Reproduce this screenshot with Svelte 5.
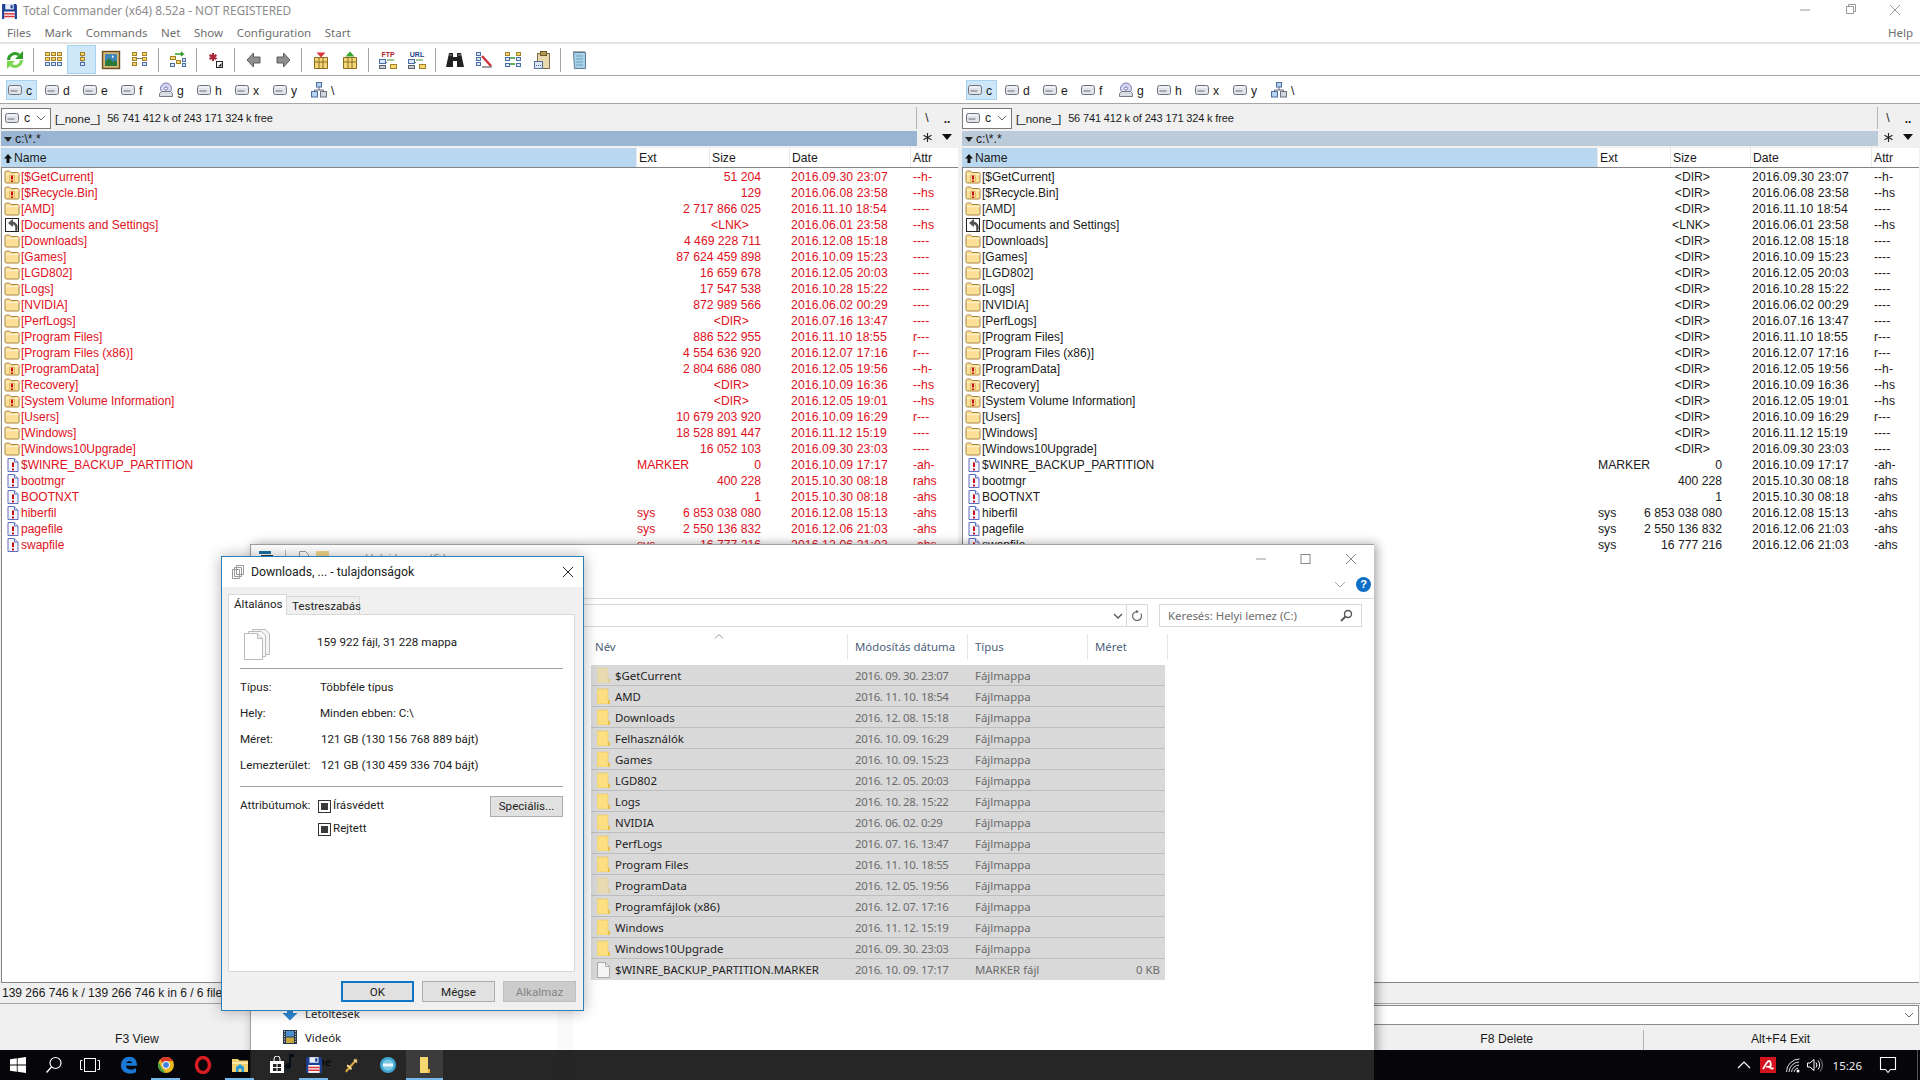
<script lang="ts">
  type Row = { name: string; ext?: string; size: string; date: string; attr: string; icon: string };

  const d = 'dir', w = 'dirwarn', l = 'link', f = 'filewarn';
  const rows: Row[] = [
    { name: '[$GetCurrent]', size: '51 204', date: '2016.09.30 23:07', attr: '--h-', icon: w },
    { name: '[$Recycle.Bin]', size: '129', date: '2016.06.08 23:58', attr: '--hs', icon: w },
    { name: '[AMD]', size: '2 717 866 025', date: '2016.11.10 18:54', attr: '----', icon: d },
    { name: '[Documents and Settings]', size: '<LNK>', date: '2016.06.01 23:58', attr: '--hs', icon: l },
    { name: '[Downloads]', size: '4 469 228 711', date: '2016.12.08 15:18', attr: '----', icon: d },
    { name: '[Games]', size: '87 624 459 898', date: '2016.10.09 15:23', attr: '----', icon: d },
    { name: '[LGD802]', size: '16 659 678', date: '2016.12.05 20:03', attr: '----', icon: d },
    { name: '[Logs]', size: '17 547 538', date: '2016.10.28 15:22', attr: '----', icon: d },
    { name: '[NVIDIA]', size: '872 989 566', date: '2016.06.02 00:29', attr: '----', icon: d },
    { name: '[PerfLogs]', size: '<DIR>', date: '2016.07.16 13:47', attr: '----', icon: d },
    { name: '[Program Files]', size: '886 522 955', date: '2016.11.10 18:55', attr: 'r---', icon: d },
    { name: '[Program Files (x86)]', size: '4 554 636 920', date: '2016.12.07 17:16', attr: 'r---', icon: d },
    { name: '[ProgramData]', size: '2 804 686 080', date: '2016.12.05 19:56', attr: '--h-', icon: w },
    { name: '[Recovery]', size: '<DIR>', date: '2016.10.09 16:36', attr: '--hs', icon: w },
    { name: '[System Volume Information]', size: '<DIR>', date: '2016.12.05 19:01', attr: '--hs', icon: w },
    { name: '[Users]', size: '10 679 203 920', date: '2016.10.09 16:29', attr: 'r---', icon: d },
    { name: '[Windows]', size: '18 528 891 447', date: '2016.11.12 15:19', attr: '----', icon: d },
    { name: '[Windows10Upgrade]', size: '16 052 103', date: '2016.09.30 23:03', attr: '----', icon: d },
    { name: '$WINRE_BACKUP_PARTITION', ext: 'MARKER', size: '0', date: '2016.10.09 17:17', attr: '-ah-', icon: f },
    { name: 'bootmgr', size: '400 228', date: '2015.10.30 08:18', attr: 'rahs', icon: f },
    { name: 'BOOTNXT', size: '1', date: '2015.10.30 08:18', attr: '-ahs', icon: f },
    { name: 'hiberfil', ext: 'sys', size: '6 853 038 080', date: '2016.12.08 15:13', attr: '-ahs', icon: f },
    { name: 'pagefile', ext: 'sys', size: '2 550 136 832', date: '2016.12.06 21:03', attr: '-ahs', icon: f },
    { name: 'swapfile', ext: 'sys', size: '16 777 216', date: '2016.12.06 21:03', attr: '-ahs', icon: f },
  ];

  // right panel has not calculated folder sizes
  const rightRows = rows.map((r) => (r.name.startsWith('[') && r.size !== '<LNK>' ? { ...r, size: '<DIR>' } : r));

  const menus = ['Files', 'Mark', 'Commands', 'Net', 'Show', 'Configuration', 'Start'];
  const tools = ['refresh', 'sep', 'brief', 'full', 'thumb', 'tree', 'sep', 'sync', 'sep', 'star', 'sep', 'back', 'fwd', 'sep', 'pack', 'unpack', 'sep', 'ftp', 'url', 'sep', 'find', 'rename', 'syncdir', 'clip', 'sep', 'note'];
  const drives = ['c', 'd', 'e', 'f', 'g', 'h', 'x', 'y'];
  const fkeys = ['F3 View', 'F4 Edit', 'F5 Copy', 'F6 Move', 'F7 NewFolder', 'F8 Delete', 'Alt+F4 Exit'];

  const explorerRows = [
    { n: '$GetCurrent', d: '2016. 09. 30. 23:07', faded: true },
    { n: 'AMD', d: '2016. 11. 10. 18:54' },
    { n: 'Downloads', d: '2016. 12. 08. 15:18' },
    { n: 'Felhasználók', d: '2016. 10. 09. 16:29' },
    { n: 'Games', d: '2016. 10. 09. 15:23' },
    { n: 'LGD802', d: '2016. 12. 05. 20:03' },
    { n: 'Logs', d: '2016. 10. 28. 15:22' },
    { n: 'NVIDIA', d: '2016. 06. 02. 0:29' },
    { n: 'PerfLogs', d: '2016. 07. 16. 13:47' },
    { n: 'Program Files', d: '2016. 11. 10. 18:55' },
    { n: 'ProgramData', d: '2016. 12. 05. 19:56', faded: true },
    { n: 'Programfájlok (x86)', d: '2016. 12. 07. 17:16' },
    { n: 'Windows', d: '2016. 11. 12. 15:19' },
    { n: 'Windows10Upgrade', d: '2016. 09. 30. 23:03' },
  ];

  const gridCells = (xs: number[], ys: number[], w = 4, h = 3) => xs.flatMap((x) => ys.map((y) => [x, y, w, h]));
</script>

{#snippet cells(list, fill, stroke)}
  {#each list as c}
    <rect x={c[0] + 0.5} y={c[1] + 0.5} width={c[2]} height={c[3]} {fill} {stroke} stroke-width="1" />
  {/each}
{/snippet}

{#snippet floppy(size)}
  <svg width={size} height={size} viewBox="0 0 16 16">
    <path d="M1 1h13l1 1v13H1z" fill="#1c3f94" />
    <rect x="4" y="1" width="8" height="5" fill="#e8eef8" />
    <rect x="9" y="2" width="2" height="3" fill="#1c3f94" />
    <rect x="3" y="8" width="10" height="7" fill="#fff" />
    <rect x="3" y="9.5" width="10" height="1.4" fill="#d8343c" />
    <rect x="3" y="12" width="10" height="1.4" fill="#d8343c" />
  </svg>
{/snippet}

{#snippet fileIcon(kind)}
  <svg class="ficon" width="16" height="16" viewBox="0 0 16 16">
    {#if kind === 'dir' || kind === 'dirwarn'}
      <path d="M1 3.500q0-1.500 1.500-1.500h3l1.500 1.500h6.500q1.500 0 1.500 1.500v8q0 1-1.500 1H2.500Q1 14 1 12.500z" fill="#fbe09a" stroke="#a5843a" />
      <path d="M1.500 5.500h13.500" stroke="#fff3cf" />
      {#if kind === 'dirwarn'}
        <rect x="5.500" y="6" width="5" height="7.500" fill="#f7d98c" stroke="#c9a34a" stroke-width=".5" />
        <path d="M8 6.500v4M8 11.500v1.500" stroke="#c8101c" stroke-width="2" />
      {/if}
    {:else if kind === 'link'}
      <rect x="1.500" y="1.500" width="13" height="13" fill="#fff" stroke="#222" />
      <path d="M11.500 13.500c.5-3.500 0-6-3-6.500v2.500L4.500 6 8.500 2.500V5c4.500.5 5.500 4 4.500 8.500z" fill="#555" stroke="#222" stroke-width=".5" />
    {:else}
      <path d="M4 1.500h6.500l3.500 3.500v9.500H4z" fill="#f4f6ff" stroke="#5f6fc0" />
      <path d="M10.500 1.500v3.500h3.500" fill="#dfe4fa" stroke="#5f6fc0" />
      <path d="M9 5.500v4.500M9 11.500v2" stroke="#c8101c" stroke-width="2" />
    {/if}
  </svg>
{/snippet}

{#snippet driveIcon(letter)}
  <svg class="dicon" width="16" height="16" viewBox="0 0 16 16">
    {#if letter === 'g'}
      <ellipse cx="8" cy="6.500" rx="5.500" ry="5.500" fill="#d6d6f2" stroke="#7a7ab4" />
      <circle cx="8" cy="6.500" r="1.500" fill="#fff" stroke="#7a7ab4" />
      <path d="M1.500 11.500l2-2h9l2 2v3h-13z" fill="#d9dce2" stroke="#737a88" />
    {:else}
      <rect x="1.500" y="3.500" width="13" height="9" rx="2" fill="#e2e4e8" stroke="#6b7280" />
      <rect x="3.500" y="8" width="7" height="2" fill="#a3a9b3" />
      <path d="M3 5h10" stroke="#fff" />
    {/if}
  </svg>
{/snippet}

{#snippet networkIcon()}
  <svg class="dicon" width="18" height="18" viewBox="0 0 18 18">
    <path d="M9 6v3M4.500 11V9h9v2" stroke="#667" fill="none" />
    <rect x="6.500" y="1.500" width="5" height="4.500" fill="#b4d2f2" stroke="#4c6d99" />
    <rect x="1.500" y="10.500" width="6" height="5.500" fill="#b4d2f2" stroke="#4c6d99" />
    <rect x="10.500" y="10.500" width="6" height="5.500" fill="#d2d6da" stroke="#6d7580" />
  </svg>
{/snippet}

{#snippet toolIcon(id)}
  <svg width="22" height="22" viewBox="0 0 22 22">
    {#if id === 'refresh'}
      <path d="M4.500 11a6.500 6.500 0 0 1 10.500-5" fill="none" stroke="#2f9e26" stroke-width="3" />
      <path d="M19 2v8h-8z" fill="#2f9e26" />
      <path d="M17.500 11a6.500 6.500 0 0 1-10.500 5" fill="none" stroke="#7ad84e" stroke-width="3" />
      <path d="M3 20v-8h8z" fill="#7ad84e" />
    {:else if id === 'brief'}
      {@render cells(gridCells([3, 9, 15], [3, 8], 4, 3), '#f6d66e', '#a4822a')}
      {@render cells(gridCells([3, 9, 15], [13], 4, 3), '#dbe6f6', '#4c6ea6')}
    {:else if id === 'full'}
      {@render cells([[9, 3, 4, 3], [9, 8, 4, 3]], '#f6d66e', '#a4822a')}
      {@render cells([[9, 13, 4, 3]], '#dbe6f6', '#4c6ea6')}
      <path d="M11 6.500v1.500M11 11.500v1.500" stroke="#777" />
    {:else if id === 'thumb'}
      <rect x="2.500" y="2.500" width="17" height="17" fill="#d8b878" stroke="#6b4c1e" stroke-width="1.400" />
      <rect x="5" y="5" width="12" height="12" fill="#3f86b8" />
      <path d="M5 17v-4l4-4 4 4 2-2 2 2v4z" fill="#2a7a38" />
      <path d="M12 6l2 2-2 1z" fill="#fff" />
    {:else if id === 'tree'}
      {@render cells([[3, 3, 4, 3], [3, 8, 4, 3], [3, 13, 4, 3], [13, 3, 4, 3], [13, 8, 4, 3]], '#f6d66e', '#a4822a')}
      {@render cells([[13, 13, 4, 3]], '#dbe6f6', '#4c6ea6')}
      <path d="M7.500 9.500h6" stroke="#777" />
    {:else if id === 'sync'}
      {@render cells([[3, 7, 5, 3], [9, 11, 4, 3]], '#f6d66e', '#a4822a')}
      {@render cells([[15, 9, 3, 3], [15, 14, 3, 3], [3, 14, 4, 3]], '#dbe6f6', '#4c6ea6')}
      <path d="M8 5h8l-2-2M16 5l-2 2" stroke="#2f9a28" fill="none" stroke-width="1.500" />
    {:else if id === 'star'}
      <path d="M8 4v8M4.500 6l7 4M11.500 6l-7 4" stroke="#a8283a" stroke-width="2.200" />
      <rect x="11.500" y="12.500" width="6" height="6" fill="#fff" stroke="#222" />
      <path d="M16.500 14v3.500h-3.500z" fill="#222" />
    {:else if id === 'back'}
      <path d="M4 11l6.500-7v4H17v6h-6.500v4z" fill="#8e8e8e" stroke="#5c5c5c" />
    {:else if id === 'fwd'}
      <path d="M18 11l-6.500-7v4H5v6h6.500v4z" fill="#8e8e8e" stroke="#5c5c5c" />
    {:else if id === 'pack' || id === 'unpack'}
      <path d="M4.500 8.500h13v11h-13z" fill="#f5d77a" stroke="#8c6c1e" />
      <path d="M4.500 13h13M9 8.500v11M13 8.500v11" stroke="#8c6c1e" />
      {#if id === 'pack'}
        <path d="M6.500 3.500h9l-4.500 5z" fill="#d8343c" />
      {:else}
        <path d="M6.500 7.500h9L11 2.500z" fill="#36a82b" />
      {/if}
    {:else if id === 'ftp' || id === 'url'}
      <text x="11" y="7.500" text-anchor="middle" class="tooltext" fill={id === 'ftp' ? '#b0202a' : '#23408c'}>{id.toUpperCase()}</text>
      {@render cells([[2, 10, 6, 4]], '#dbe6f6', '#4c6ea6')}
      {@render cells([[2, 16, 6, 3]], '#c6cbd2', '#5d6570')}
      {@render cells([[13, 15, 6, 4]], '#f6d66e', '#a4822a')}
      <path d="M10 11h7M10 13.500h-1" stroke="#3b8f2e" />
    {:else if id === 'find'}
      <path d="M5 4h4v4h4V4h4l3 14h-7V12H9v6H2z" fill="#222" />
      <path d="M5 6h3M14 6h3" stroke="#888" />
    {:else if id === 'rename'}
      {@render cells(gridCells([3], [3, 8, 13], 4, 3), '#dbe6f6', '#4c6ea6')}
      <path d="M9 7l9 10" stroke="#d0343c" stroke-width="2.500" />
      <path d="M9 18h10" stroke="#444" />
    {:else if id === 'syncdir'}
      {@render cells([[3, 3, 4, 3], [14, 3, 4, 3]], '#f6d66e', '#a4822a')}
      {@render cells([[3, 8, 4, 3], [14, 8, 4, 3], [3, 14, 4, 3], [14, 14, 4, 3]], '#dbe6f6', '#4c6ea6')}
      <path d="M8 9h5M8 15h5" stroke="#2f9a28" stroke-width="1.300" />
    {:else if id === 'clip'}
      <rect x="6.500" y="4.500" width="12" height="15" fill="#e9d9ae" stroke="#7a6b44" />
      <rect x="9.500" y="2.500" width="6" height="4" fill="#b49a52" stroke="#6c5a28" />
      <rect x="3.500" y="12.500" width="8" height="7" fill="#dde6f4" stroke="#56709a" />
      <path d="M5 16.500h5" stroke="#56709a" stroke-dasharray="1 1" />
    {:else if id === 'note'}
      <path d="M4.500 3.500h12v16h-11z" fill="#a8d2ea" stroke="#5a7d92" />
      <path d="M7 7h7M7 10h7M7 13h7M7 16h7" stroke="#6fa0bc" />
      <path d="M4.500 2.500h12" stroke="#555" stroke-dasharray="1 1" />
    {/if}
  </svg>
{/snippet}

{#snippet driveBar()}
  <div class="drivebar">
    {#each drives as letter, i}
      <span class="drive" class:on={i === 0}>{@render driveIcon(letter)}<span class="dletter">{letter}</span></span>
    {/each}
    <span class="drive">{@render networkIcon()}<span class="dletter">\</span></span>
  </div>
{/snippet}

{#snippet panel(list, active)}
  <section class="panel">
    <div class="head">
      <div class="info">
        <div class="combo">{@render driveIcon('c')}<span>c</span><svg class="chev" width="10" height="6" viewBox="0 0 10 6"><path d="M1 1l4 4 4-4" fill="none" stroke="#666" /></svg></div>
        <span class="none">[_none_]</span>
        <span class="free">56 741 412 k of 243 171 324 k free</span>
      </div>
      <div class="navbtns"><span>\</span><span class="dots">..</span></div>
      <div class="pathbar" class:active>
        <svg width="9" height="5" viewBox="0 0 9 5"><path d="M0 0h8L4 5z" fill="#222" /></svg>c:\*.*
      </div>
      <div class="navbtns second">
        <svg width="9" height="9" viewBox="0 0 9 9"><path d="M4.500 0v9M.5 2.200l8 4.600M8.500 2.200l-8 4.600" stroke="#222" stroke-width="1.100" /></svg>
        <svg width="10" height="6" viewBox="0 0 10 6"><path d="M0 0h10L5 6z" fill="#111" /></svg>
      </div>
    </div>
    <div class="cols colhead">
      <div class="sorted"><svg width="8" height="9" viewBox="0 0 8 9"><path d="M4 0l4 4.500H5.500V9h-3V4.500H0z" fill="#111" /></svg>Name</div>
      <div>Ext</div>
      <div>Size</div>
      <div>Date</div>
      <div>Attr</div>
    </div>
    <div class="list" class:marked={active}>
      {#each list as r}
        <div class="cols row">
          <div class="name">{@render fileIcon(r.icon)}<span>{r.name}</span></div>
          <div class="ext">{r.ext ?? ''}</div>
          <div class="size" class:tag={r.size.startsWith('<')}>{r.size}</div>
          <div class="date">{r.date}</div>
          <div class="attr">{r.attr}</div>
        </div>
      {/each}
    </div>
    <div class="status">{active ? '139 266 746 k / 139 266 746 k in 6 / 6 file(s)' : '0 k / 139 266 746 k in 0 / 6 file(s)'}</div>
  </section>
{/snippet}

<div class="screen">
  <div class="tc">
    <div class="titlebar">
      <span class="appicon">{@render floppy(17)}</span>
      <span class="apptitle">Total Commander (x64) 8.52a - NOT REGISTERED</span>
      <div class="caption">
        <svg width="46" height="16" viewBox="0 0 46 16"><path d="M18 8h10" stroke="#999" /></svg>
        <svg width="46" height="16" viewBox="0 0 46 16"><path d="M19.500 4.500h7v7h-7zM21.500 4.500v-2h7v7h-2" fill="none" stroke="#999" /></svg>
        <svg width="46" height="16" viewBox="0 0 46 16"><path d="M18 3l10 10M28 3L18 13" stroke="#999" /></svg>
      </div>
    </div>
    <nav class="menu">
      {#each menus as m}<span>{m}</span>{/each}
      <span class="help">Help</span>
    </nav>
    <div class="toolbar">
      {#each tools as t}
        {#if t === 'sep'}
          <span class="sep"></span>
        {:else}
          <span class="tool" class:on={t === 'full'}>{@render toolIcon(t)}</span>
        {/if}
      {/each}
    </div>
    <div class="drives">
      {@render driveBar()}
      {@render driveBar()}
    </div>
    <div class="panels">
      {@render panel(rows, true)}
      {@render panel(rightRows, false)}
    </div>
    <div class="cmd">
      <div class="cmdbox"><svg width="10" height="6" viewBox="0 0 10 6"><path d="M1 1l4 4 4-4" fill="none" stroke="#666" /></svg></div>
    </div>
    <div class="fkeys">
      {#each fkeys as k}<span>{k}</span>{/each}
    </div>
  </div>

  <div class="taskbar">
    <span class="tb sys"><svg width="16" height="16" viewBox="0 0 16 16"><path d="M0 2.300l6.800-1v6.200H0zM7.600 1.200L16 0v7.500H7.600zM0 8.400h6.800v6.300L0 13.700zM7.600 8.400H16V16l-8.400-1.200z" fill="#fff" /></svg></span>
    <span class="tb sys"><svg width="18" height="18" viewBox="0 0 18 18"><circle cx="10.500" cy="7" r="5.500" fill="none" stroke="#fff" stroke-width="1.200" /><path d="M6.500 11L1.500 16.500" stroke="#fff" stroke-width="1.400" /></svg></span>
    <span class="tb sys"><svg width="20" height="16" viewBox="0 0 20 16"><rect x="4.500" y="1.500" width="11" height="13" fill="none" stroke="#fff" /><path d="M2.500 3.500h-2v9h2M17.500 3.500h2v9h-2" fill="none" stroke="#fff" /></svg></span>
    <span class="tb first"><svg width="18" height="18" viewBox="0 0 18 18"><path d="M1 9.500C1 4 5 .8 9.500.8 14 .8 17 4 17 9.800H6c.2 4 5.800 5 10 2.500v3.900c-6 3-15 1-15-6.700zM6.200 7h6C12 4.500 7 4.500 6.200 7z" fill="#1a78d6" /></svg></span>
    <span class="tb open"><svg width="18" height="18" viewBox="0 0 18 18"><circle cx="9" cy="9" r="8" fill="#e8b820" /><path d="M9 1a8 8 0 0 1 7 4H9a4 4 0 0 0-3.500 2L3 3.200A8 8 0 0 1 9 1z" fill="#d8382c" /><path d="M1.500 6L5 12.500l3.500 4.400A8 8 0 0 1 1.500 6z" fill="#3aa04a" /><circle cx="9" cy="9" r="3.500" fill="#3f7fe0" stroke="#fff" /></svg></span>
    <span class="tb"><svg width="18" height="18" viewBox="0 0 18 18"><ellipse cx="9" cy="9" rx="6.500" ry="7.500" fill="none" stroke="#d81c24" stroke-width="3.500" /></svg></span>
    <span class="tb open"><svg width="18" height="18" viewBox="0 0 18 18"><path d="M1 3h6l1.500 1.500H17V16H1z" fill="#f2cf6e" /><path d="M1 6h16v2H1z" fill="#fbe6a4" /><path d="M5 16v-5l4-3 4 3v5h-2.500v-3h-3v3z" fill="#2a9ad6" /></svg></span>
    <span class="tb"><svg width="18" height="18" viewBox="0 0 18 18"><path d="M2 5h14v12H2z" fill="#fff" /><path d="M6 5V3a3 3 0 0 1 6 0v2" fill="none" stroke="#fff" /><path d="M5 8h3.500v3H5zM9.500 8H13v3H9.500zM5 12h3.500v3H5zM9.500 12H13v3H9.500z" fill="#222" /></svg></span>
    <span class="tb open">{@render floppy(18)}</span>
    <span class="tb"><svg width="18" height="18" viewBox="0 0 18 18"><path d="M3 15L14 2.500l1.500 1.500L4.500 16.500z" fill="#e0b04a" stroke="#7a5a18" stroke-width=".6" /><path d="M5 9.500c2 .5 3.500 2 4 4" fill="none" stroke="#f0d890" stroke-width="2.200" /><path d="M12 3.500l3 3" stroke="#f4e4b0" stroke-width="1.400" /></svg></span>
    <span class="tb"><svg width="18" height="18" viewBox="0 0 18 18"><circle cx="9" cy="9" r="8" fill="#3fa6d0" /><circle cx="9" cy="9" r="5.500" fill="#7cc8e4" /><rect x="4" y="7.500" width="10" height="3" fill="#eaf6fa" /></svg></span>
    <span class="tb active"><svg width="14" height="18" viewBox="0 0 14 18"><path d="M2 1h8v12h2v4H2z" fill="#f6d66e" /><path d="M10 13h2v4h-2z" fill="#e0b23c" /></svg></span>

    <div class="tray">
      <svg width="14" height="8" viewBox="0 0 14 8"><path d="M1 7l6-6 6 6" fill="none" stroke="#fff" stroke-width="1.200" /></svg>
      <span class="avira"><svg width="16" height="16" viewBox="0 0 16 16"><rect width="16" height="16" fill="#d3131d" /><path d="M3 12c2-3 4-8 6-8s2 4 1.500 5c-1 1-3 1-4.500 .5M10 10c.5 1.500 2 2 3.500 1" fill="none" stroke="#fff" stroke-width="1.800" /></svg></span>
      <svg class="wifi" width="16" height="16" viewBox="0 0 16 16"><g fill="none" stroke="#ddd"><path d="M1.500 15A13 13 0 0 1 14.500 2" /><path d="M4 15A10.500 10.500 0 0 1 14 5" /><path d="M6.500 15A8 8 0 0 1 14 8" /><path d="M9 15a5 5 0 0 1 4-4" /></g><circle cx="13" cy="14" r="1.500" fill="#fff" /></svg>
      <svg class="spk" width="18" height="16" viewBox="0 0 18 16"><path d="M1.500 6h2.500L8 2.500v11L4 10H1.500z" fill="none" stroke="#fff" /><path d="M10 5.500a4 4 0 0 1 0 5M12 3.500a7 7 0 0 1 0 9" fill="none" stroke="#fff" /><path d="M14 1.500a10 10 0 0 1 0 13" fill="none" stroke="#888" /></svg>
      <span class="clock">15:26</span>
      <svg class="bubble" width="18" height="18" viewBox="0 0 18 18"><path d="M1.500 1.500h15v12h-5l-2.500 3-2.500-3h-5z" fill="none" stroke="#fff" stroke-width="1.100" /></svg>
      <span class="showdesk"></span>
    </div>
  </div>

  <div class="explorer">
    <div class="extitle">
      <svg class="qa" width="14" height="12" viewBox="0 0 14 12"><rect y="1" width="12" height="3" fill="#1d6fa8" /><rect x="2" y="5" width="12" height="3" fill="#333" /></svg>
      <span class="qasep"></span>
      <svg class="qa" width="12" height="12" viewBox="0 0 12 12"><path d="M1.500 1.500h6l3 3v7h-9z" fill="#fff" stroke="#999" /></svg>
      <svg class="qa" width="13" height="12" viewBox="0 0 13 12"><rect y="1" width="13" height="11" fill="#f0d68a" /></svg>
      <span class="fadedtitle">Helyi lemez (C:)</span>
      <div class="excaption">
        <svg width="45" height="16" viewBox="0 0 45 16"><path d="M18 8h10" stroke="#999" /></svg>
        <svg width="45" height="16" viewBox="0 0 45 16"><rect x="18" y="3.500" width="9" height="9" fill="none" stroke="#888" /></svg>
        <svg width="45" height="16" viewBox="0 0 45 16"><path d="M18 3l10 10M28 3L18 13" stroke="#888" /></svg>
      </div>
    </div>
    <div class="exribbon">
      <svg width="12" height="7" viewBox="0 0 12 7"><path d="M1 1l5 5 5-5" fill="none" stroke="#aaa" /></svg>
      <span class="helpdot">?</span>
    </div>
    <div class="exaddr">
      <div class="addrbox">
        <svg width="10" height="6" viewBox="0 0 10 6"><path d="M1 1l4 4 4-4" fill="none" stroke="#555" stroke-width="1.300" /></svg>
        <span class="addrbtn"><svg width="12" height="12" viewBox="0 0 12 12"><path d="M9.800 3.500A4.500 4.500 0 1 1 6 1.500" fill="none" stroke="#666" stroke-width="1.200" /><path d="M5 0l3 1.600L5.400 3.500z" fill="#666" /></svg></span>
      </div>
      <div class="searchbox">
        <span>Keresés: Helyi lemez (C:)</span>
        <svg width="13" height="13" viewBox="0 0 13 13"><circle cx="8" cy="5" r="3.500" fill="none" stroke="#555" stroke-width="1.400" /><path d="M5.500 7.500L1 12" stroke="#555" stroke-width="1.800" /></svg>
      </div>
    </div>
    <div class="exbody">
      <aside class="exnav">
        <div class="navrow"><span class="navlabel">Dokumentumok</span></div>
        <div class="navrow">
          <svg class="navarrow" width="18" height="18" viewBox="0 0 18 18"><path d="M6 1h6v8h4.500L9 16.500 1.500 9H6z" fill="#2f86d4" /></svg>
          <span>Letöltések</span>
        </div>
        <div class="navrow">
          <svg width="16" height="16" viewBox="0 0 16 16"><rect x="1" y="1" width="14" height="14" fill="#2b3a4c" /><rect x="4" y="2" width="8" height="5.500" fill="#4a8fd0" /><rect x="4" y="8.500" width="8" height="5.500" fill="#c8a83c" /><path d="M2.500 2v12M13.500 2v12" stroke="#ccc" stroke-dasharray="1 1.500" /></svg>
          <span>Videók</span>
        </div>
        <div class="navrow">
          <svg width="16" height="16" viewBox="0 0 16 16"><path d="M7 1h5v3H9v9a3 3 0 1 1-2-2.800z" fill="#1d5a8a" /></svg>
          <span>Zene</span>
        </div>
      </aside>
      <div class="exscroll"></div>
      <div class="exmain">
        <div class="excols exhead">
          <div>Név<svg class="sortmark" width="10" height="5" viewBox="0 0 10 5"><path d="M1 4.500l4-4 4 4" fill="none" stroke="#999" /></svg></div>
          <div>Módosítás dátuma</div>
          <div>Típus</div>
          <div>Méret</div>
        </div>
        <div class="exrows">
          {#each explorerRows as r}
            <div class="excols exrow">
              <div class="exname">
                <svg class:faded={r.faded} width="13" height="16" viewBox="0 0 13 16"><path d="M0 1h11v11h2v4H0z" fill="#fbdf81" stroke="#e3c25f" stroke-width=".6" /><path d="M11 12h2v4h-2z" fill="#e8bf48" /></svg>
                <span>{r.n}</span>
              </div>
              <div class="dim exdate">{r.d}</div>
              <div class="dim">Fájlmappa</div>
              <div></div>
            </div>
          {/each}
          <div class="excols exrow">
            <div class="exname">
              <svg width="13" height="16" viewBox="0 0 13 16"><path d="M.5.500h8l4 4v11H.500z" fill="#f5f5f5" stroke="#aaa" /><path d="M8.500.500v4h4" fill="none" stroke="#aaa" /></svg>
              <span>$WINRE_BACKUP_PARTITION.MARKER</span>
            </div>
            <div class="dim exdate">2016. 10. 09. 17:17</div>
            <div class="dim">MARKER fájl</div>
            <div class="dim sizecell">0 KB</div>
          </div>
        </div>
      </div>
    </div>
  </div>

  <div class="dialog">
    <div class="dlgtitle">
      <svg width="13" height="14" viewBox="0 0 13 14"><path d="M4.500.500h7v9h-7zM2.500 2.500h7v9h-7zM.500 4.500h7v9h-7z" fill="#fff" stroke="#999" /></svg>
      <span>Downloads, ... - tulajdonságok</span>
      <svg class="dlgclose" width="12" height="12" viewBox="0 0 12 12"><path d="M1 1l10 10M11 1L1 11" stroke="#222" /></svg>
    </div>
    <div class="dlgbody">
      <div class="tabs">
        <span class="tab on">Általános</span>
        <span class="tab">Testreszabás</span>
      </div>
      <div class="page">
        <div class="summary">
          <svg width="28" height="32" viewBox="0 0 28 32">
            <path d="M9.500 1.500h13l4 4v21h-17z" fill="#f4f4f4" stroke="#bbb" />
            <path d="M5.500 3.500h13l4 4v21h-17z" fill="#f9f9f9" stroke="#bbb" />
            <path d="M1.500 5.500h13l5 5v21h-18z" fill="#fff" stroke="#bbb" />
            <path d="M14.500 5.500v5h5" fill="#eee" stroke="#bbb" />
          </svg>
          <span class="count">159 922 fájl, 31 228 mappa</span>
        </div>
        <hr />
        <div class="props">
          <span>Típus:</span><span>Többféle típus</span>
          <span>Hely:</span><span>Minden ebben: C:\</span>
          <span>Méret:</span><span class="shift">121 GB (130 156 768 889 bájt)</span>
          <span>Lemezterület:</span><span class="shift">121 GB (130 459 336 704 bájt)</span>
        </div>
        <hr class="second" />
        <div class="attrs">
          <span class="attrlabel">Attribútumok:</span>
          <span class="check"></span>
          <span class="up">Írásvédett</span>
          <span class="btn special">Speciális...</span>
        </div>
        <div class="attrs two">
          <span class="attrlabel"></span>
          <span class="check"></span>
          <span class="up">Rejtett</span>
        </div>
      </div>
      <div class="dlgbtns">
        <span class="btn ok">OK</span>
        <span class="btn">Mégse</span>
        <span class="btn off">Alkalmaz</span>
      </div>
    </div>
  </div>
</div>

<style>
  :global(body) { margin: 0; background: #fff; }

  .screen {
    position: relative;
    width: 1920px;
    height: 1080px;
    overflow: hidden;
    display: flex;
    flex-direction: column;
    font-family: "Liberation Sans", Arial, sans-serif;
    font-size: 12.2px;
    color: #1a1a1a;
  }

  /* Total Commander window */
  .tc { height: 1050px; display: flex; flex-direction: column; background: #fff; }
  .titlebar { height: 22px; display: flex; align-items: center; color: #8c8c8c; font-family: "Noto Sans", sans-serif; font-size: 11.8px; }
  .appicon { display: flex; margin: 0 5px 0 1px; }
  .apptitle { padding-bottom: 2px; }
  .caption { margin-left: auto; display: flex; padding-right: 2px; margin-top: -3px; }
  .caption svg { display: block; margin-left: -1px; }

  .menu {
    height: 20px;
    display: flex;
    align-items: center;
    gap: 13.5px;
    padding: 0 7px;
    color: #6e6e6e;
    font-family: "Noto Sans", sans-serif;
    font-size: 11.5px;
    border-bottom: 2px solid #e4e4e4;
  }
  .help { margin-left: auto; }

  .toolbar { height: 31px; display: flex; align-items: center; border-bottom: 1px solid #a6a6a6; }
  .tool { width: 29px; height: 29px; display: flex; align-items: center; justify-content: center; box-sizing: border-box; }
  .tool.on { background: #cde6f8; border: 1px solid #a6d2f0; }
  .sep { width: 9px; height: 24px; position: relative; }
  .sep::after { content: ''; position: absolute; left: 4px; top: 0; bottom: 0; width: 1px; background: #a6a6a6; }
  .tooltext { font: bold 7px "Liberation Sans", sans-serif; }

  .drives { height: 27px; display: grid; grid-template-columns: 960px 960px; border-bottom: 1px solid #a6a6a6; }
  .drivebar { display: flex; align-items: center; padding-left: 6px; }
  .drive { width: 38px; height: 20px; box-sizing: border-box; display: flex; align-items: center; gap: 3px; }
  .drive.on { width: 31px; margin-right: 7px; background: #cde6f8; border: 1px solid #a6d2f0; }
  .dletter { padding-top: 2px; }
  .dicon { flex: none; }

  .panels { flex: 1; min-height: 0; display: grid; grid-template-columns: 958px 958px; column-gap: 3px; background: #f0f0f0; }
  .panel { display: flex; flex-direction: column; min-width: 0; padding-left: 1px; }
  .head { display: grid; grid-template-columns: 916px 41px; grid-template-rows: 27px 16px; margin-bottom: 1px; }
  .info { display: flex; align-items: center; gap: 4px; border-right: 1px solid #b4b4b4; margin: 3px 0 2px; }
  .combo { width: 50px; height: 21px; box-sizing: border-box; background: #fff; border: 1px solid #7a7a7a; display: flex; align-items: center; gap: 4px; padding-left: 2px; }
  .combo .chev { margin-left: auto; margin-right: 4px; }
  .none { font-size: 11.6px; }
  .free { font-size: 11px; letter-spacing: -0.15px; margin-left: 3px; }
  .navbtns { display: grid; grid-template-columns: 20px 20px; align-items: center; justify-items: center; font-size: 12px; }
  .dots { font-weight: bold; margin-top: 2px; }
  .second { height: 12px; }
  .pathbar { background: #bccbda; display: flex; align-items: center; gap: 2px; padding: 1px 0 0 3px; box-sizing: border-box; line-height: 14px; height: 15px; }
  .pathbar.active { background: #9ab5d3; }

  .cols { display: grid; grid-template-columns: 635px 73px 80px 121px 47px; }
  .colhead { height: 19px; line-height: 18px; background: #fff; border-bottom: 1px solid #858585; }
  .colhead > div { padding: 1px 0 0 2px; border-left: 1px solid #e8e8e8; }
  .colhead > div:first-child { border-left: 0; }
  .colhead .sorted { background: #b9d8ef; display: flex; align-items: center; gap: 2px; padding-left: 3px; }

  .list { flex: 1; min-height: 0; padding-top: 1px; background: #fff; overflow: hidden; border-bottom: 1px solid #858585; border-left: 1px solid #858585; }
  .list.marked .row { color: #e01020; }
  .row { height: 16px; line-height: 16px; white-space: nowrap; }
  .row > div { min-width: 0; }
  .row .name { display: flex; align-items: center; gap: 1px; padding-left: 2px; font-size: 12px; }
  .row .size { display: flex; justify-content: flex-end; padding-right: 29px; }
  .row .size.tag { padding-right: 41px; }
  .row .date { padding-left: 1px; letter-spacing: 0.12px; }
  .row .attr { padding-left: 2px; }
  .status { height: 20px; line-height: 20px; padding-left: 1px; font-size: 12px; white-space: nowrap; overflow: hidden; }

  .cmd { height: 27px; box-sizing: border-box; border-top: 1px solid #a6a6a6; background: #f0f0f0; padding: 1px 1px 6px 420px; }
  .cmdbox { height: 20px; box-sizing: border-box; background: #fff; border: 1px solid #8a8a8a; display: flex; align-items: center; justify-content: flex-end; padding-right: 4px; }
  .fkeys { height: 20px; display: grid; grid-template-columns: repeat(7, 1fr); padding-right: 3px; background: #f0f0f0; text-align: center; line-height: 19px; }
  .fkeys span { border-left: 1px solid #b0b0b0; }
  .fkeys span:first-child { border-left: 0; }

  /* Taskbar, see-through where the explorer window lies behind it */
  .taskbar {
    position: relative;
    z-index: 3;
    height: 30px;
    display: flex;
    background: linear-gradient(90deg, #05050a 250px, rgba(0, 0, 0, 0.85) 250px, rgba(0, 0, 0, 0.85) 1374px, #05050a 1374px);
  }
  .tb { width: 37px; display: flex; align-items: center; justify-content: center; box-sizing: border-box; }
  .tb.sys { width: 36px; }
  .tb.first { margin-left: 2px; }
  .tb.open { box-shadow: inset 0 -2px 0 #76b9ed; clip-path: inset(0 4px 0 4px); }
  .tb.active { background: #3c3c3c; box-shadow: inset 0 -2px 0 #76b9ed; }
  .tray { margin-left: auto; display: flex; align-items: center; color: #eee; font-size: 12px; }
  .avira { display: flex; margin-left: 9px; }
  .wifi { margin-left: 9px; }
  .spk { margin-left: 5px; }
  .clock { margin: 0 0 0 9px; font-family: "Noto Sans", sans-serif; font-size: 11.5px; }
  .bubble { margin-left: 17px; }
  .showdesk { width: 1px; height: 30px; background: #555; margin-left: 20px; margin-right: 2px; }

  /* Explorer window */
  .explorer {
    position: absolute;
    left: 250px;
    top: 544px;
    width: 1124px;
    height: 536px;
    box-sizing: border-box;
    background: #fff;
    border: 1px solid #a0a0a0;
    border-bottom: 0;
    border-right: 0;
    box-shadow: 3px 0 10px rgba(0, 0, 0, 0.35);
    display: flex;
    flex-direction: column;
    font-family: "Noto Sans", sans-serif;
    font-size: 11.4px;
    color: #222;
    z-index: 1;
  }
  .extitle { height: 30px; display: flex; align-items: flex-start; padding-top: 5px; box-sizing: border-box; gap: 6px; padding-left: 8px; }
  .qa { flex: none; }
  .qasep { width: 1px; height: 12px; background: #bbb; margin: 0 6px; }
  .fadedtitle { margin-left: 30px; color: #999; }
  .excaption { margin-left: auto; display: flex; padding-right: 1px; margin-top: 1px; }
  .excaption svg { display: block; }
  .exribbon { height: 24px; box-sizing: border-box; border-bottom: 1px solid #dadada; display: flex; align-items: center; justify-content: flex-end; gap: 10px; padding: 0 3px 4px 0; }
  .helpdot { width: 15px; height: 15px; border-radius: 50%; background: #0f6fc6; color: #fff; font: bold 11px/15px "Liberation Sans", sans-serif; text-align: center; }
  .exaddr { height: 35px; box-sizing: border-box; display: flex; padding: 5px 12px 7px 160px; }
  .addrbox { flex: 1; height: 23px; box-sizing: border-box; border: 1px solid #d9d9d9; display: flex; align-items: center; justify-content: flex-end; gap: 3px; border-left: 0; }
  .addrbtn { width: 20px; height: 21px; border-left: 1px solid #d9d9d9; display: flex; align-items: center; justify-content: center; }
  .searchbox { width: 203px; height: 23px; box-sizing: border-box; margin-left: 11px; border: 1px solid #d9d9d9; display: flex; align-items: center; justify-content: space-between; padding: 0 8px; color: #6d6d6d; }

  .exbody { flex: 1; min-height: 0; display: flex; }
  .exnav { width: 306px; display: flex; flex-direction: column; justify-content: flex-end; padding-bottom: 7px; box-sizing: border-box; }
  .navrow { height: 24px; display: flex; align-items: center; gap: 7px; padding-left: 31px; box-sizing: border-box; flex: none; }
  .navlabel { padding-left: 25px; }
  .navarrow { margin-left: -1px; margin-right: -1px; }
  .exscroll { width: 16px; background: #fafafa; }
  .exmain { flex: 1; padding-left: 18px; display: flex; flex-direction: column; }
  .excols { display: grid; grid-template-columns: 257px 120px 120px 77px; width: 574px; }
  .exhead { height: 25px; line-height: 25px; color: #4c607a; margin-bottom: 6px; width: 577px; grid-template-columns: 257px 120px 120px 80px; }
  .exhead > div { position: relative; padding-left: 7px; box-sizing: border-box; border-right: 1px solid #e5e5e5; }
  .exhead > div:first-child { padding-left: 4px; }
  .sortmark { position: absolute; left: 123px; top: 0; }
  .exrow { height: 21px; box-sizing: border-box; background: #d9d9d9; border-bottom: 1px solid #bdbdbd; align-items: center; white-space: nowrap; }
  .exrow:last-child { border-bottom: 0; }
  .exrow > div { padding-left: 7px; min-width: 0; }
  .exrow .exname { display: flex; align-items: center; gap: 5px; padding-left: 6px; color: #1e1e1e; }
  .exname .faded { opacity: 0.45; }
  .dim { color: #6b6b6b; }
  .exdate { letter-spacing: -0.3px; }
  .exrow .sizecell { text-align: right; padding: 0 5px 0 0; }

  /* Properties dialog */
  .dialog {
    position: absolute;
    left: 221px;
    top: 556px;
    width: 363px;
    height: 455px;
    box-sizing: border-box;
    border: 1px solid #2a80b9;
    background: #f0f0f0;
    box-shadow: 0 0 14px rgba(0, 0, 0, 0.3);
    display: flex;
    flex-direction: column;
    font-family: Roboto, "Noto Sans", sans-serif;
    font-size: 11.6px;
    color: #222;
    z-index: 2;
  }
  .dlgtitle { height: 30px; background: #fff; display: flex; align-items: center; gap: 6px; padding-left: 10px; flex: none; font-size: 12.3px; }
  .dlgclose { margin-left: auto; margin-right: 9px; }
  .dlgbody { flex: 1; padding: 7px 8px 0 6px; display: flex; flex-direction: column; }
  .tabs { display: flex; height: 20px; position: relative; z-index: 1; align-items: flex-end; flex: none; }
  .tab { height: 18px; line-height: 18px; box-sizing: border-box; padding: 0 5px; background: #f0f0f0; border: 1px solid #d9d9d9; border-bottom: 0; width: 73px; border-left: 0; text-align: center; }
  .tab.on { height: 21px; line-height: 18px; background: #fff; width: 59px; border-left: 1px solid #d9d9d9; position: relative; top: 1px; }
  .page { height: 358px; box-sizing: border-box; background: #fff; border: 1px solid #d9d9d9; padding: 13px 11px 0 11px; flex: none; }
  .summary { height: 32px; display: flex; align-items: center; gap: 46px; padding-left: 3px; margin-bottom: 8px; }
  .count { padding-bottom: 5px; }
  .page hr { border: 0; height: 1px; background: #a0a0a0; margin: 0; }
  .props { display: grid; grid-template-columns: 80px 1fr; grid-auto-rows: 26px; align-items: center; margin-top: 6px; }
  .props span { padding-bottom: 2px; }
  .props .shift { padding-left: 1px; }
  .page hr.second { margin-top: 7px; }
  .attrs { display: flex; align-items: center; height: 22px; gap: 2px; margin-top: 8px; }
  .attrs.two { margin-top: 1px; }
  .attrlabel { width: 76px; padding-bottom: 2px; }
  .up { padding-bottom: 2px; }
  .check { width: 13px; height: 13px; box-sizing: border-box; border: 1px solid #333; background: #fff; padding: 2px; background-clip: content-box; background-color: #3a3a3a; box-shadow: inset 0 0 0 2px #fff; }
  .btn { width: 73px; height: 21px; box-sizing: border-box; background: #e1e1e1; border: 1px solid #adadad; display: flex; align-items: center; justify-content: center; }
  .special { margin-left: auto; }
  .dlgbtns { display: flex; justify-content: flex-end; gap: 8px; margin: 9px -1px 0 0; }
  .ok { border: 2px solid #0d76c6; }
  .off { background: #cccccc; border-color: #bfbfbf; color: #858585; }
</style>
